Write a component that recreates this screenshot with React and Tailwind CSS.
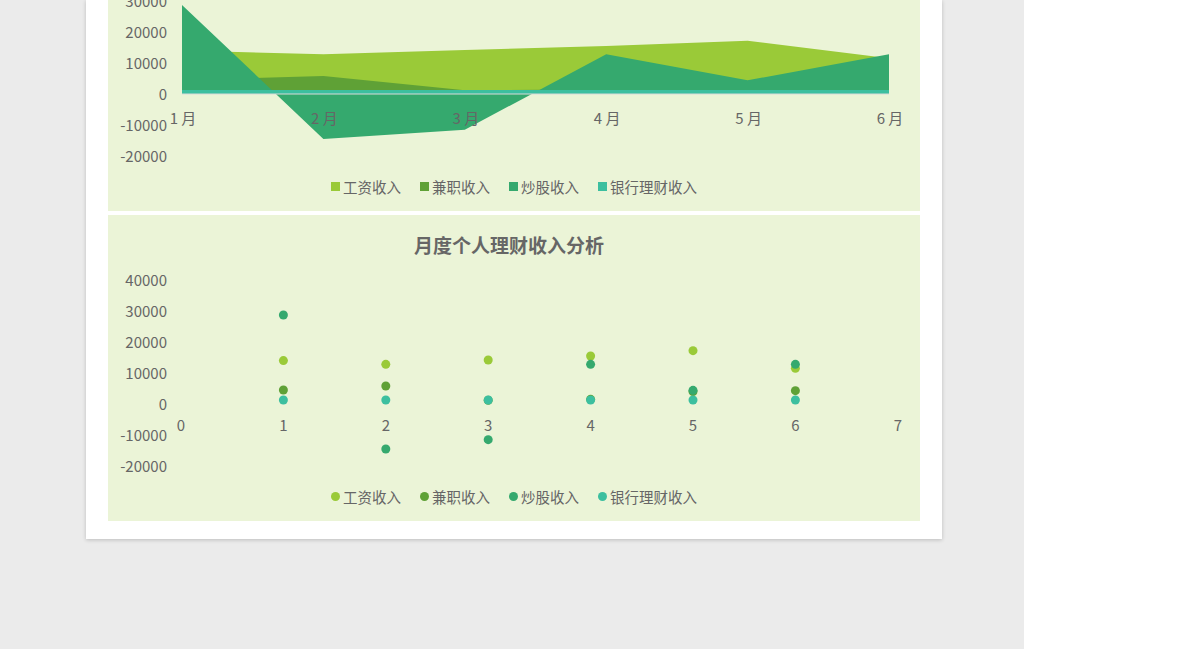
const C = { sal: '#9aca38', pt: '#5fa136', st: '#35a96e', bk: '#3cbf9f' };
const F = "'Microsoft YaHei','Noto Sans CJK SC',sans-serif";

const data = {
  sal: [14000, 12800, 14200, 15500, 17200, 11500],
  pt: [4500, 5800, 1200, 1500, 4000, 4300],
  st: [28700, -14500, -11500, 12800, 4400, 12800],
  bk: [1300, 1300, 1300, 1300, 1300, 1300],
};

function Legend({ dot }) {
  const items = [['工资收入', C.sal], ['兼职收入', C.pt], ['炒股收入', C.st], ['银行理财收入', C.bk]];
  return (
    <div className="flex justify-center gap-[19px] text-[14.5px] text-[#666]" style={{ fontFamily: F }}>
      {items.map(([t, c]) => (
        <div key={t} className="flex items-center gap-[3px]">
          <span className={dot ? 'w-[9px] h-[9px] rounded-full' : 'w-[9px] h-[9px]'} style={{ background: c }} />
          {t}
        </div>
      ))}
    </div>
  );
}

function AreaChart() {
  const X = (i) => 74 + i * 141.4;
  const Y = (v) => 94 - v * 0.0031;
  const area = (arr) =>
    `M${X(0)},${Y(0)} ` + arr.map((v, i) => `L${X(i)},${Y(v)}`).join(' ') + ` L${X(5)},${Y(0)} Z`;
  const ticks = [30000, 20000, 10000, 0, -10000, -20000];
  return (
    <svg width="812" height="170" style={{ fontFamily: F }}>
      {ticks.map((t) => (
        <text key={t} x="59" y={Y(t) + 6} textAnchor="end" fontSize="15" fill="#666">{t}</text>
      ))}
      <path d={area(data.sal)} fill={C.sal} />
      <path d={area(data.pt)} fill={C.pt} />
      <path d={area(data.st)} fill={C.st} />
      <path d={area(data.bk)} fill={C.bk} />
      <line x1={X(0)} x2={X(5)} y1={Y(0)} y2={Y(0)} stroke="#d9d9d9" strokeWidth="1" />
      {[0, 1, 2, 3, 4, 5].map((i) => (
        <text key={i} x={X(i) + 1} y="124" textAnchor="middle" fontSize="15" fill="#666">{`${i + 1} 月`}</text>
      ))}
    </svg>
  );
}

function ScatterChart() {
  const X = (i) => 73 + i * 102.4;
  const Y = (v) => 159 - v * 0.0031;
  const ticks = [40000, 30000, 20000, 10000, 0, -10000, -20000];
  return (
    <svg width="812" height="260" style={{ fontFamily: F }}>
      {ticks.map((t) => (
        <text key={t} x="59" y={Y(t) + 6} textAnchor="end" fontSize="15" fill="#666">{t}</text>
      ))}
      {[0, 1, 2, 3, 4, 5, 6, 7].map((i) => (
        <text key={i} x={X(i)} y={Y(0) + 27} textAnchor="middle" fontSize="15" fill="#666">{i}</text>
      ))}
      {['sal', 'pt', 'st', 'bk'].map((k) =>
        data[k].map((v, i) => <circle key={k + i} cx={X(i + 1)} cy={Y(v)} r="4.5" fill={C[k]} />)
      )}
    </svg>
  );
}

export default function App() {
  return (
    <div className="flex h-[649px] w-[1200px] overflow-hidden bg-white">
      <div className="w-[1024px] h-full bg-[#ebebeb] pl-[86px]">
        <div className="w-[856px] bg-white px-[22px] pb-[18px] shadow-[0_1px_4px_rgba(0,0,0,0.2)] flex flex-col gap-[4px]">
          <div className="h-[211px] bg-[#ebf4d7] flex flex-col pt-0">
            <AreaChart />
            <div className="mt-[6px]"><Legend /></div>
          </div>
          <div className="h-[306px] bg-[#ebf4d7] flex flex-col">
            <div className="text-center text-[19px] font-bold text-[#666] pt-[16px] h-[50px] pr-[10px]" style={{ fontFamily: F }}>月度个人理财收入分析</div>
            <div className="-mt-[20px]"><ScatterChart /></div>
            <div className="-mt-[19px]"><Legend dot /></div>
          </div>
        </div>
      </div>
    </div>
  );
}
